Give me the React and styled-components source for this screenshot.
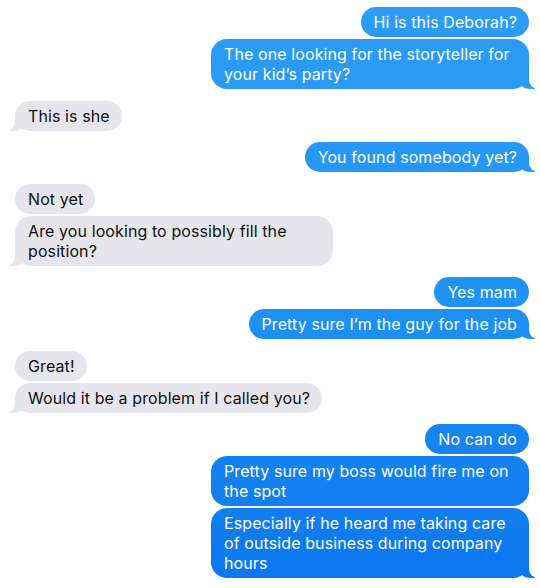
import React from 'react';
import styled, { createGlobalStyle, css } from 'styled-components';

const GlobalStyle = createGlobalStyle`
  html, body {
    margin: 0;
    padding: 0;
    background: #ffffff;
  }
  body {
    font-family: Inter, "Noto Sans", "Liberation Sans", sans-serif;
    -webkit-font-smoothing: antialiased;
  }
`;

const BLUE = 'linear-gradient(to bottom, #2d9df5 0px, #1f92f3 300px, #0b76ef 588px) fixed';
const GRAY = '#e6e5eb';

const Thread = styled.div`
  display: flex;
  flex-direction: column;
  padding: 7px 11px 0 15px;
`;

const Group = styled.div`
  display: flex;
  flex-direction: column;
  align-items: ${(p) => (p.$mine ? 'flex-end' : 'flex-start')};
  gap: 2px;
  margin-bottom: 11.5px;
`;

const tailMine = css`
  &::before {
    content: '';
    position: absolute;
    bottom: 0;
    right: -6px;
    width: 18px;
    height: 16px;
    background: ${BLUE};
    border-bottom-left-radius: 14px 12px;
  }
  &::after {
    content: '';
    position: absolute;
    bottom: 0;
    right: -22px;
    width: 22px;
    height: 16px;
    background: #ffffff;
    border-bottom-left-radius: 9px;
  }
`;

const tailTheirs = css`
  &::before {
    content: '';
    position: absolute;
    bottom: 0;
    left: -6px;
    width: 18px;
    height: 16px;
    background: ${GRAY};
    border-bottom-right-radius: 14px 12px;
  }
  &::after {
    content: '';
    position: absolute;
    bottom: 0;
    left: -22px;
    width: 22px;
    height: 16px;
    background: #ffffff;
    border-bottom-right-radius: 9px;
  }
`;

const Bubble = styled.div`
  position: relative;
  z-index: 0;
  max-width: 318px;
  box-sizing: border-box;
  padding: 5px 12px 5px 13px;
  border-radius: 16px;
  font-size: 16px;
  line-height: 20px;
  letter-spacing: 0.1px;
  color: ${(p) => (p.$mine ? '#ffffff' : '#111111')};
  background: ${(p) => (p.$mine ? BLUE : GRAY)};

  &::before, &::after { z-index: -1; }

  ${(p) => p.$tail && (p.$mine ? tailMine : tailTheirs)}
`;

const conversation = [
  { mine: true, lines: ['Hi is this Deborah?', 'The one looking for the storyteller for your kid\u2019s party?'] },
  { mine: false, lines: ['This is she'] },
  { mine: true, lines: ['You found somebody yet?'] },
  { mine: false, lines: ['Not yet', 'Are you looking to possibly fill the position?'] },
  { mine: true, lines: ['Yes mam', 'Pretty sure I\u2019m the guy for the job'] },
  { mine: false, lines: ['Great!', 'Would it be a problem if I called you?'] },
  {
    mine: true,
    lines: [
      'No can do',
      'Pretty sure my boss would fire me on the spot',
      'Especially if he heard me taking care of outside business during company hours',
    ],
  },
];

export default function App() {
  return (
    <>
      <GlobalStyle />
      <Thread>
        {conversation.map((group, i) => (
          <Group key={i} $mine={group.mine}>
            {group.lines.map((text, j) => (
              <Bubble key={j} $mine={group.mine} $tail={j === group.lines.length - 1}>
                {text}
              </Bubble>
            ))}
          </Group>
        ))}
      </Thread>
    </>
  );
}
